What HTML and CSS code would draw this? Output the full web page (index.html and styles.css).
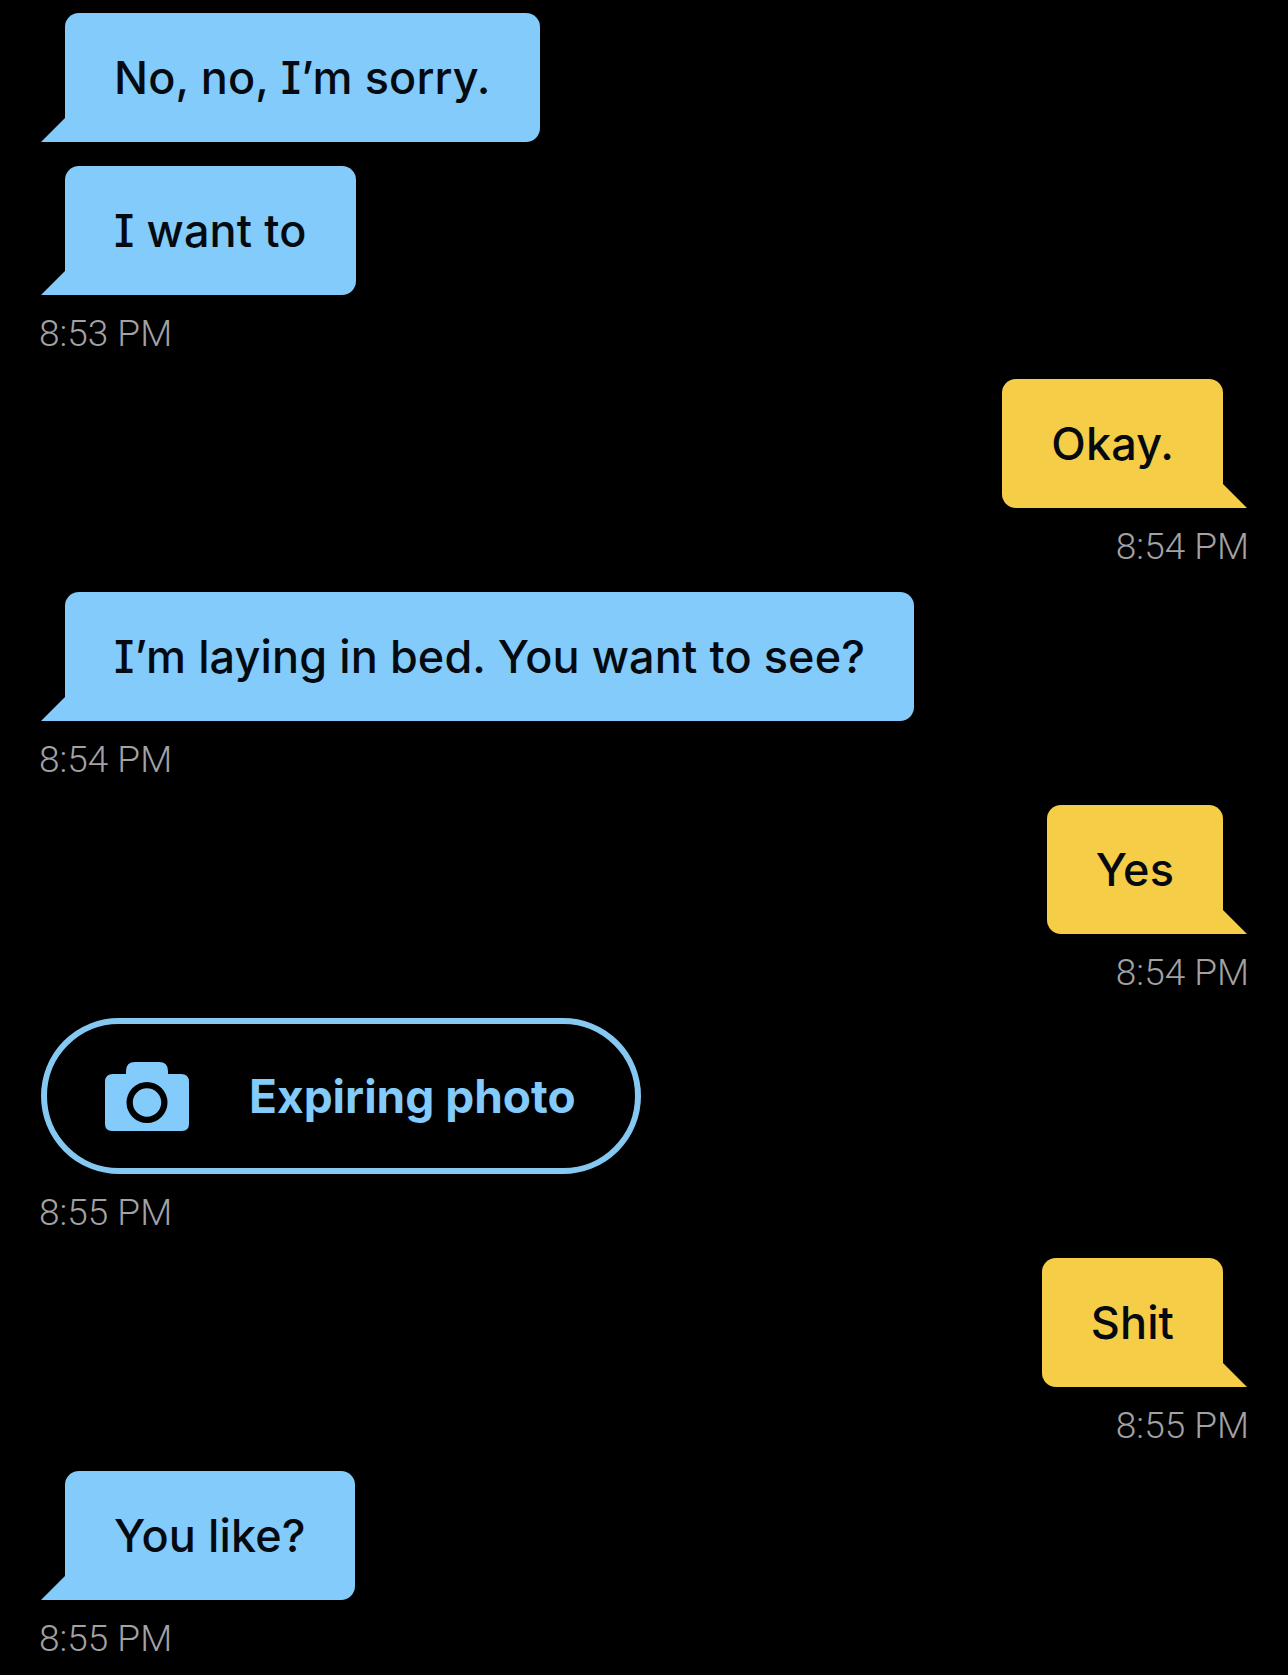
FILE: index.html
```html
<!DOCTYPE html>
<html lang="en">

<head>
    <meta charset="UTF-8">
    <meta name="viewport" content="width=device-width, initial-scale=1.0">
    <title>Chat</title>
    <link rel="stylesheet" href="styles.css">
</head>

<body>

    <div class="chat">
        <div class="group in">
            <div class="bubble">No, no, I’m sorry.</div>
            <div class="bubble">I want to</div>
            <div class="time">8:53 PM</div>
        </div>

        <div class="group out">
            <div class="bubble">Okay.</div>
            <div class="time">8:54 PM</div>
        </div>

        <div class="group in">
            <div class="bubble">I’m laying in bed. You want to see?</div>
            <div class="time">8:54 PM</div>
        </div>

        <div class="group out">
            <div class="bubble">Yes</div>
            <div class="time">8:54 PM</div>
        </div>

        <div class="group in">
            <div class="photo">
                <svg class="photo-icon" viewBox="0 0 84 69" aria-hidden="true">
                    <path fill-rule="evenodd" d="M21 12 V9 Q21 0 30 0 H54 Q63 0 63 9 V12 H76 Q84 12 84 20 V62 Q84 69 77 69 H7 Q0 69 0 62 V20 Q0 12 8 12 Z M42 20 A20.5 20.5 0 1 0 42 61 A20.5 20.5 0 1 0 42 20 Z M42 26.3 A14.2 14.2 0 1 1 42 54.7 A14.2 14.2 0 1 1 42 26.3 Z"/>
                </svg>
                <span>Expiring photo</span>
            </div>
            <div class="time">8:55 PM</div>
        </div>

        <div class="group out">
            <div class="bubble">Shit</div>
            <div class="time">8:55 PM</div>
        </div>

        <div class="group in">
            <div class="bubble">You like?</div>
            <div class="time">8:55 PM</div>
        </div>
    </div>

</body>

</html>
```

FILE: styles.css
```css
body {
    margin: 0;
    background-color: #000;
    font-family: Inter, "Noto Sans", sans-serif;
}

.chat {
    display: flex;
    flex-direction: column;
    gap: 26px;
    height: 1675px;
    box-sizing: border-box;
    padding: 13px 41px 0;
    overflow: hidden;
}

.group {
    display: flex;
    flex-direction: column;
    gap: 24px;
}

.in {
    align-items: flex-start;
}

.out {
    align-items: flex-end;
}

.bubble {
    position: relative;
    height: 129px;
    box-sizing: border-box;
    padding: 0 49px 1px;
    display: flex;
    align-items: center;
    border-radius: 14px;
    color: #050a10;
    font-size: 45px;
    font-weight: 500;
    letter-spacing: 0.1px;
    font-feature-settings: "cv08";
    white-space: nowrap;
}

/* colita do balao */
.bubble::after {
    content: "";
    position: absolute;
    bottom: 0;
    width: 24px;
    height: 24px;
}

.in .bubble {
    margin-left: 24px;
    background-color: #82cbfa;
    border-bottom-left-radius: 0;
}

.in .bubble::after {
    left: -24px;
    background-color: #82cbfa;
    clip-path: polygon(100% 0, 100% 100%, 0 100%);
}

.out .bubble {
    margin-right: 24px;
    background-color: #f5cd47;
    border-bottom-right-radius: 0;
}

.out .bubble::after {
    right: -24px;
    background-color: #f5cd47;
    clip-path: polygon(0 0, 100% 100%, 0 100%);
}

.time {
    height: 40px;
    margin: -5px -2px -1px;
    line-height: 40px;
    color: #a2a2a6;
    font-family: Roboto, sans-serif;
    font-size: 37px;
    font-weight: 300;
}

.photo {
    display: flex;
    align-items: center;
    gap: 60px;
    height: 156px;
    box-sizing: border-box;
    padding: 0 59px 0 58px;
    border: 6px solid #85c8f2;
    border-radius: 78px;
    color: #82cbfa;
    font-size: 46px;
    font-weight: 700;
}

.photo-icon {
    width: 84px;
    height: 69px;
    fill: #82cbfa;
}
```
